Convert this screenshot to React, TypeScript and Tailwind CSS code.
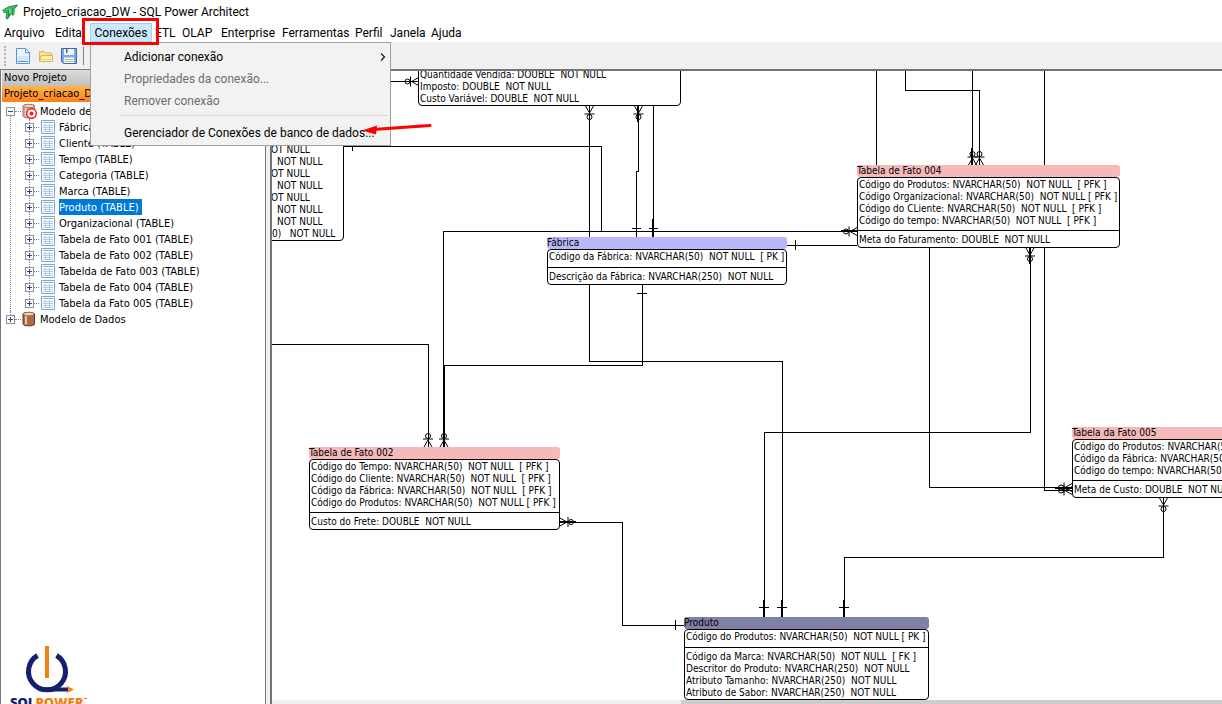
import { useState } from "react";

type Side = "top" | "bottom" | "left" | "right";

interface TableNode {
  name: string;
  place: string;
  header: string;
  keys: string[];
  columns: string[];
  keyPad: string;
  columnPad: string;
}

const PINK = "bg-[#f5b9b9]";

const tables: TableNode[] = [
  {
    name: "Fábrica",
    place: "left-[547px] top-[237px] w-[240px]",
    header: "bg-[#b8b8f8]",
    keys: ["Código da Fábrica: NVARCHAR(50)  NOT NULL  [ PK ]"],
    columns: ["Descrição da Fábrica: NVARCHAR(250)  NOT NULL"],
    keyPad: "pt-px pb-1",
    columnPad: "pt-[3px] pb-px",
  },
  {
    name: "Tabela de Fato 004",
    place: "left-[857px] top-[165px] w-[263px]",
    header: PINK,
    keys: [
      "Código do Produtos: NVARCHAR(50)  NOT NULL  [ PFK ]",
      "Código Organizacional: NVARCHAR(50)  NOT NULL [ PFK ]",
      "Código do CLiente: NVARCHAR(50)  NOT NULL  [ PFK ]",
      "Código do tempo: NVARCHAR(50)  NOT NULL  [ PFK ]",
    ],
    columns: ["Meta do Faturamento: DOUBLE  NOT NULL"],
    keyPad: "pt-px pb-[3px]",
    columnPad: "pt-[3px] pb-px",
  },
  {
    name: "Tabela de Fato 002",
    place: "left-[309px] top-[447px] w-[251px]",
    header: PINK,
    keys: [
      "Código do Tempo: NVARCHAR(50)  NOT NULL  [ PFK ]",
      "Código do Cliente: NVARCHAR(50)  NOT NULL  [ PFK ]",
      "Código da Fábrica: NVARCHAR(50)  NOT NULL  [ PFK ]",
      "Código do Produtos: NVARCHAR(50)  NOT NULL [ PFK ]",
    ],
    columns: ["Custo do Frete: DOUBLE  NOT NULL"],
    keyPad: "pt-px pb-[3px]",
    columnPad: "pt-[3px] pb-px",
  },
  {
    name: "Tabela da Fato 005",
    place: "left-[1072px] top-[427px] w-[251px]",
    header: PINK,
    keys: [
      "Código do Produtos: NVARCHAR(50)  NOT NULL  [ PFK ]",
      "Código da Fábrica: NVARCHAR(50)  NOT NULL  [ PFK ]",
      "Código do tempo: NVARCHAR(50)  NOT NULL  [ PFK ]",
    ],
    columns: ["Meta de Custo: DOUBLE  NOT NULL"],
    keyPad: "pt-px pb-[3px]",
    columnPad: "pt-[3px] pb-px",
  },
  {
    name: "Produto",
    place: "left-[684px] top-[617px] w-[245px]",
    header: "bg-[#8080a8]",
    keys: ["Código do Produtos: NVARCHAR(50)  NOT NULL [ PK ]"],
    columns: [
      "Código da Marca: NVARCHAR(50)  NOT NULL  [ FK ]",
      "Descritor do Produto: NVARCHAR(250)  NOT NULL",
      "Atributo Tamanho: NVARCHAR(250)  NOT NULL",
      "Atributo de Sabor: NVARCHAR(250)  NOT NULL",
    ],
    keyPad: "pt-px pb-1",
    columnPad: "pt-[3px]",
  },
];

const relationPaths = [
  "M390 81.5H418",
  "M589.5 105V361.5H782.5V617",
  "M638.5 105V171.5H636.5V237",
  "M653.5 105V237",
  "M343 146.5H601.5V231",
  "M352.5 146V151",
  "M857 231.5H443.5V447",
  "M787 245.5H857",
  "M876.5 71V165",
  "M905.5 71V90.5H979.5V165",
  "M972.5 71V165",
  "M1044.5 71V165M1044.5 247V490.5H1072",
  "M929.5 247V487.5H1072",
  "M1030.5 247V432.5H764.5V617",
  "M642.5 284V365.5H444.5V447",
  "M272 344.5H428.5V447",
  "M560 522.5H622.5V625.5H684",
  "M1163.5 497V557.5H844.5V617",
];

const stubs = [
  "M638 106V122",
  "M653 219V237",
  "M972 148V165",
  "M1030 248V264",
  "M444 430V447",
  "M764 600V617",
  "M782 600V617",
  "M844 600V617",
  "M841 231H857",
  "M560 522H576",
  "M1055 488H1072",
];

const ticks = [
  "M632 228.5H641",
  "M649 228.5H658",
  "M637 293.5H647",
  "M795.5 240V250",
  "M759 607.5H769",
  "M777 607.5H787",
  "M839 607.5H849",
  "M675.5 620V630",
];

const feet: { x: number; y: number; side: Side }[] = [
  { x: 418.5, y: 81.5, side: "left" },
  { x: 589.5, y: 106, side: "bottom" },
  { x: 638.5, y: 106, side: "bottom" },
  { x: 972.5, y: 165, side: "top" },
  { x: 979.5, y: 165, side: "top" },
  { x: 857, y: 231.5, side: "left" },
  { x: 1030, y: 248, side: "bottom" },
  { x: 428, y: 447, side: "top" },
  { x: 444, y: 447, side: "top" },
  { x: 560, y: 522, side: "right" },
  { x: 1072, y: 487.5, side: "left" },
  { x: 1072, y: 490.5, side: "left" },
  { x: 1163.5, y: 498, side: "bottom" },
];

const angle: Record<Side, number> = { bottom: 0, left: 90, top: 180, right: 270 };

function CrowFoot({ x, y, side }: { x: number; y: number; side: Side }) {
  return (
    <g transform={`translate(${x} ${y}) rotate(${angle[side]})`}>
      <path d="M-4 0L0 7L4 0M-5 8H5" />
      <circle cx="0" cy="11" r="2.5" />
    </g>
  );
}

function Relations() {
  return (
    <svg
      className="absolute left-0 top-0 h-[720px] w-[1400px]"
      viewBox="0 0 1400 720"
      fill="none"
      stroke="#000"
      aria-hidden="true"
    >
      {relationPaths.map((d) => (
        <path key={d} d={d} shapeRendering="crispEdges" />
      ))}
      {stubs.map((d) => (
        <path key={d} d={d} strokeWidth="2" shapeRendering="crispEdges" />
      ))}
      {ticks.map((d) => (
        <path key={d} d={d} shapeRendering="crispEdges" />
      ))}
      {feet.map((foot) => (
        <CrowFoot key={`${foot.x}-${foot.y}`} {...foot} />
      ))}
    </svg>
  );
}

function TableBox({ table }: { table: TableNode }) {
  return (
    <section className={`absolute whitespace-pre leading-3 ${table.place}`}>
      <h3 className={`rounded-[3px] ${table.header}`}>{table.name}</h3>
      <div className="rounded-[4px] border border-black bg-white">
        <ul className={`pl-px ${table.keyPad}`}>
          {table.keys.map((key) => (
            <li key={key}>{key}</li>
          ))}
        </ul>
        <ul className={`border-t border-black pl-px ${table.columnPad}`}>
          {table.columns.map((column) => (
            <li key={column}>{column}</li>
          ))}
        </ul>
      </div>
    </section>
  );
}

function PlayPen() {
  return (
    <main className="relative min-h-0 flex-1 overflow-hidden bg-white font-['DejaVu_Sans_Condensed','DejaVu_Sans',sans-serif] text-[10px] text-black">
      {/* Diagram surface, scrolled away from its origin */}
      <div className="absolute -left-[272px] -top-[71px] h-[720px] w-[1400px]">
        <Relations />
        <ul className="absolute left-[418px] top-[57px] w-[263px] whitespace-pre rounded-[4px] border border-black bg-white pl-px pt-[11px] leading-3">
          <li>Quantidade Vendida: DOUBLE  NOT NULL</li>
          <li>Imposto: DOUBLE  NOT NULL</li>
          <li>Custo Variável: DOUBLE  NOT NULL</li>
        </ul>
        <ul className="absolute left-[262px] top-[119px] w-[82px] whitespace-pre rounded-[4px] border border-black bg-white pt-6 leading-3">
          <li className="pl-2">OT NULL</li>
          <li className="pl-3.5">NOT NULL</li>
          <li className="pl-2">OT NULL</li>
          <li className="pl-3.5">NOT NULL</li>
          <li className="pl-2">OT NULL</li>
          <li className="pl-3.5">NOT NULL</li>
          <li className="pl-3.5">NOT NULL</li>
          <li className="pl-[9px]">0)   NOT NULL</li>
        </ul>
        {tables.map((table) => (
          <TableBox key={table.name} table={table} />
        ))}
      </div>
    </main>
  );
}

function AppIcon() {
  return (
    <svg className="size-4" viewBox="0 0 16 16" aria-hidden="true">
      <path d="M.5 6.500L6 3L15.500 1L13 4.500L12.500 11L10 12L9.500 9.500L5.500 15.500L4 14L5 8.500L1.500 8.500Z" fill="#3fc065" />
      <path d="M.5 6.500L6 3L15.500 1L13 4.500M1.500 8.500L5 8L4 14L5.500 15L9 9" fill="none" stroke="#2a5a3a" strokeWidth=".8" />
      <path d="M6.500 6V12M10.500 4.500V11" stroke="#1e8a42" />
      <path d="M8 5V9" stroke="#9af0b2" />
    </svg>
  );
}

function NewIcon() {
  return (
    <svg className="size-4" viewBox="0 0 16 16" aria-hidden="true">
      <path d="M1.500 .5H10.500L14.500 4.500V15.500H1.500Z" fill="#eaf5fe" stroke="#5b94cf" />
      <path d="M10.500 .5V4.500H14.500Z" fill="#fff" stroke="#5b94cf" />
      <path d="M2.500 8H13.500V14H2.500Z" fill="#cfe7fa" />
      <path d="M3 13.500H13" stroke="#3fa0f0" />
    </svg>
  );
}

function OpenIcon() {
  return (
    <svg className="size-4" viewBox="0 0 16 16" aria-hidden="true">
      <path d="M1.500 13.500V3.500H6L7.500 5H13.500V7" fill="#fbe29a" stroke="#e0b04a" />
      <path d="M1.500 13.500L3.500 7.500H14.500V13.500Z" fill="#fdf0bd" stroke="#e0b04a" />
      <path d="M4 11.500H13" stroke="#f3c75a" />
    </svg>
  );
}

function SaveIcon() {
  return (
    <svg className="size-4" viewBox="0 0 16 16" aria-hidden="true">
      <path d="M.5 .5H15.500V15.500H2.500L.5 13.500Z" fill="#7fa9e0" stroke="#3c68b2" />
      <path d="M3 1H13V7H3Z" fill="#eef5fd" />
      <path d="M5 1H6.500V5H5Z" fill="#3c68b2" />
      <path d="M3 9.500H13V15H3Z" fill="#fff" />
      <path d="M4 11.500H12M4 13.500H12" stroke="#8fbf7a" />
    </svg>
  );
}

function DatabaseIcon({ target }: { target?: boolean }) {
  return (
    <svg className="size-4 shrink-0 overflow-visible" viewBox="0 0 16 16" aria-hidden="true">
      <path
        d="M2 3C2 .8 13.500 .8 13.500 3V13C13.500 15.500 2 15.500 2 13Z"
        fill={target ? "#dcae90" : "#ad6b45"}
        stroke={target ? "#a4775c" : "#5e3420"}
      />
      <path d="M5 5V13.500" stroke="#e8c3a8" strokeWidth="2" />
      <ellipse cx="7.750" cy="3" rx="5.200" ry="1.700" fill="#efd3bf" stroke="#8a583c" strokeWidth=".6" />
      {target && (
        <g>
          <circle cx="10.500" cy="10.500" r="4.800" fill="#fff" stroke="#f01b24" strokeWidth="1.400" />
          <circle cx="10.500" cy="10.500" r="1.900" fill="#f01b24" />
        </g>
      )}
    </svg>
  );
}

function TableIcon() {
  return (
    <svg className="h-4 w-[14px] shrink-0" viewBox="0 0 14 16" aria-hidden="true">
      <path d="M.5 1.500H13.500V14.500H.5Z" fill="#fff" stroke="#7ba4dc" />
      <path d="M2 3.500H12" stroke="#86b878" />
      <path d="M2 6.500H12M2 8.500H12M2 10.500H12M2 12.500H12M4.500 5V13M8.500 5V13" stroke="#b4cbee" />
    </svg>
  );
}

function Expander({ open, label }: { open?: boolean; label: string }) {
  return (
    <button type="button" aria-label={label} className="relative size-[9px] shrink-0 bg-white">
      <svg className="block size-[9px]" viewBox="0 0 9 9" fill="none" shapeRendering="crispEdges" aria-hidden="true">
        <path d="M.5 .5H8.500V8.500H.5Z" stroke="#919191" fill="#f7f7f7" />
        <path d="M2 4.500H7" stroke="#2f4a8a" />
        {!open && <path d="M4.500 2V7" stroke="#2f4a8a" />}
      </svg>
    </button>
  );
}

const treeTables = [
  "Fábrica (TABLE)",
  "Cliente (TABLE)",
  "Tempo (TABLE)",
  "Categoria (TABLE)",
  "Marca (TABLE)",
  "Produto (TABLE)",
  "Organizacional (TABLE)",
  "Tabela de Fato 001 (TABLE)",
  "Tabela de Fato 002 (TABLE)",
  "Tabelda de Fato 003 (TABLE)",
  "Tabela de Fato 004 (TABLE)",
  "Tabela da Fato 005 (TABLE)",
];

function Tree() {
  const [selected, setSelected] = useState("Produto (TABLE)");

  return (
    <ul className="leading-[18px]">
      <li className="relative">
        <span className="absolute bottom-0 left-2 top-3 border-l border-dotted border-[#808080]" />
        <div className="flex h-4 items-center pl-1">
          <Expander open label="Recolher Modelo de Dados" />
          <span className="w-1.5 border-t border-dotted border-[#808080]" />
          <DatabaseIcon target />
          <span className="h-4 pl-[3px]">Modelo de Dados</span>
        </div>
        <ul className="relative">
          <span className="absolute bottom-2 left-[27px] top-0 border-l border-dotted border-[#808080]" />
          {treeTables.map((name) => (
            <li key={name} className="flex h-4 items-center pl-[23px]">
              <Expander label={`Expandir ${name}`} />
              <span className="mr-0.5 w-[5px] border-t border-dotted border-[#808080]" />
              <TableIcon />
              <button
                type="button"
                onClick={() => setSelected(name)}
                className={`ml-1 h-4 pr-[3px] ${name === selected ? "bg-[#0078d7] text-white" : ""}`}
              >
                {name}
              </button>
            </li>
          ))}
        </ul>
      </li>
      <li className="relative flex h-4 items-center pl-1">
        <span className="absolute left-2 top-0 h-2 border-l border-dotted border-[#808080]" />
        <Expander label="Expandir Modelo de Dados" />
        <span className="w-1.5 border-t border-dotted border-[#808080]" />
        <DatabaseIcon />
        <span className="h-4 pl-[3px]">Modelo de Dados</span>
      </li>
    </ul>
  );
}

function Logo() {
  return (
    <svg className="mt-auto h-[60px] w-[90px] shrink-0" viewBox="0 0 90 60" role="img" aria-label="SQL Power">
      <path d="M35.500 11.500A18.500 18.500 0 1 0 54.500 11.500" fill="none" stroke="#14206e" strokeWidth="5" />
      <path d="M43 45.500H66" stroke="#14206e" strokeWidth="4" />
      <path d="M45 2V34" stroke="#f57f17" strokeWidth="4" />
      <path d="M64 41.500L72 45.500L64 49.500L66.500 45.500Z" fill="#f57f17" />
      <text x="8" y="63" className="font-['Open_Sans',sans-serif] text-[13px] font-extrabold" fill="#14206e">
        SQL
        <tspan fill="#f57f17">POWER</tspan>
      </text>
      <path d="M82 54.500H85" stroke="#f57f17" />
    </svg>
  );
}

function Sidebar() {
  return (
    <aside className="flex w-[266px] shrink-0 flex-col overflow-hidden border-x border-t border-[#73737c] bg-white pl-px font-['DejaVu_Sans_Condensed','DejaVu_Sans',sans-serif] text-[11px]">
      <button type="button" className="h-4 shrink-0 bg-linear-to-b from-[#dcdcdc] to-[#c0c0c0] pl-0.5 text-left leading-4">
        Novo Projeto
      </button>
      <button type="button" className="mb-px h-4 shrink-0 bg-linear-to-b from-[#ffb64d] to-[#ff7d14] pl-0.5 text-left leading-4">
        Projeto_criacao_DW
      </button>
      <Tree />
      <Logo />
    </aside>
  );
}

function ConnectionsMenu() {
  return (
    <div role="menu" className="absolute left-0 top-full z-20 w-[301px] border border-[#a0a0a0] bg-[#f2f2f2] pb-px pl-[33px] pr-0.5 pt-[3px]">
      <button type="button" role="menuitem" className="flex h-[22px] w-full items-center justify-between text-left">
        Adicionar conexão
        <svg className="mr-0.5 h-2 w-1.5" viewBox="0 0 6 8" fill="none" stroke="#222" strokeWidth="1.300" aria-hidden="true">
          <path d="M1 .5L4.500 4L1 7.500" />
        </svg>
      </button>
      <button type="button" role="menuitem" disabled className="flex h-[22px] w-full items-center text-[#6d6d6d]">
        Propriedades da conexão...
      </button>
      <button type="button" role="menuitem" disabled className="flex h-[22px] w-full items-center text-[#6d6d6d]">
        Remover conexão
      </button>
      <hr className="-ml-1 mb-[6px] mt-[3px] border-[#d7d7d7]" />
      <button type="button" role="menuitem" className="flex h-[22px] w-full items-center whitespace-nowrap">
        Gerenciador de Conexões de banco de dados...
      </button>
      <svg className="absolute left-[270px] top-[78px] h-4 w-[74px]" viewBox="0 0 74 16" aria-hidden="true">
        <path d="M69 4.500L12 8.500" stroke="#fe0000" strokeWidth="3" strokeLinecap="round" />
        <path d="M1 9.500L16 4.500L15 13.500Z" fill="#fe0000" />
      </svg>
    </div>
  );
}

const menusAfter = [
  { label: "ETL", width: "w-[27px]" },
  { label: "OLAP", width: "w-[39px]" },
  { label: "Enterprise", width: "w-[61px]" },
  { label: "Ferramentas", width: "w-[73px]" },
  { label: "Perfil", width: "w-[35px]" },
  { label: "Janela", width: "w-[41px]" },
  { label: "Ajuda", width: "w-[41px]" },
];

function MenuBar() {
  const [open, setOpen] = useState(true);

  return (
    <nav className="flex h-[19px] bg-white leading-5">
      <button type="button" className="w-[55px] pl-1 text-left">Arquivo</button>
      <button type="button" className="w-[35px] text-left">Editar</button>
      <div className="relative mr-[3px] w-[62px]">
        <button
          type="button"
          onClick={() => setOpen(!open)}
          className="block h-[19px] w-full border border-[#99d1ff] bg-[#cce8ff] text-center leading-[18px]"
        >
          Conexões
        </button>
        {open && <ConnectionsMenu />}
        <span className="pointer-events-none absolute -left-2 -top-[5px] z-30 h-[27px] w-[77px] border-[3px] border-[#fe0000]" />
        <span className="absolute -left-[5px] -top-0.5 h-[21px] w-[5px] bg-white" />
      </div>
      {menusAfter.map((menu) => (
        <button key={menu.label} type="button" className={`text-left ${menu.width}`}>
          {menu.label}
        </button>
      ))}
    </nav>
  );
}

export default function App() {
  return (
    <div className="flex h-screen flex-col overflow-hidden bg-[#f0f0f0] font-['Roboto','Open_Sans',sans-serif] text-[12px] text-black">
      <header className="flex h-[23px] shrink-0 items-center bg-white pl-0.5">
        <AppIcon />
        <h1 className="pl-[5px]">Projeto_criacao_DW - SQL Power Architect</h1>
      </header>
      <MenuBar />
      <div role="toolbar" className="flex h-[27px] shrink-0 items-center pl-1">
        <span className="mr-[9px] h-5 border-l-2 border-dotted border-[#b4b4b4]" />
        <button type="button" aria-label="Novo" className="mr-[7px]">
          <NewIcon />
        </button>
        <button type="button" aria-label="Abrir" className="mr-[7px]">
          <OpenIcon />
        </button>
        <button type="button" aria-label="Salvar">
          <SaveIcon />
        </button>
        <span className="ml-1.5 h-[18px] border-l border-[#808080]" />
      </div>
      <div className="flex min-h-0 flex-1">
        <Sidebar />
        <div className="ml-1 flex min-w-0 flex-1 flex-col border-l-2 border-t-2 border-[#73737c]">
          <PlayPen />
          <div className="flex h-1 shrink-0 justify-end bg-[#f0f0f0]">
            <span className="w-[57%] bg-[#cdcdcd]" />
          </div>
        </div>
      </div>
    </div>
  );
}
